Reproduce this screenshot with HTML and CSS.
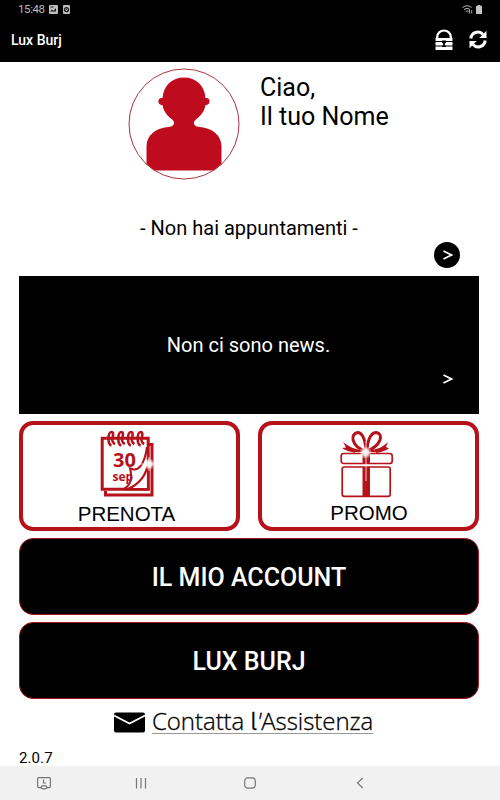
FILE: index.html
```html
<!DOCTYPE html>
<html lang="it">
<head>
    <meta charset="UTF-8">
    <meta name="viewport" content="width=device-width, initial-scale=1">
    <title>Lux Burj</title>
    <link rel="stylesheet" href="styles.css">
</head>
<body>

<div class="status-bar">
    <span class="clock">15:48</span>
    <svg class="status-image" width="9" height="9" viewBox="0 0 9 9">
        <rect width="9" height="9" rx="1" fill="#bbb"/>
        <path d="M1 6.5l2-2 1.5 1.2L7 3v3.5z" fill="#222"/>
        <path d="M1.5 2h3" stroke="#222"/>
    </svg>
    <svg width="7" height="9" viewBox="0 0 7 9">
        <rect width="7" height="9" rx="1" fill="#bbb"/>
        <circle cx="3.5" cy="4.6" r="2" fill="none" stroke="#111" stroke-width="1.2"/>
        <path d="M3 4.6l1-.8" stroke="#111"/>
    </svg>
    <div class="status-right">
        <svg width="11" height="9" viewBox="0 0 11 9" fill="none" stroke="#bbb">
            <path d="M.5 2.5Q5-1 9.500 2.500M2 4.500Q5 2 8 4.500M3.700 6.500Q5 5 6.500 6.500"/>
            <path d="M7.500 5v3.500M9.700 5v3.500" stroke-width=".9"/>
        </svg>
        <svg width="6" height="9" viewBox="0 0 6 9" fill="#c4c4c4">
            <path d="M1.500 0h3v1H6v8H0V1h1.500z"/>
        </svg>
    </div>
</div>

<header class="app-bar">
    <h1>Lux Burj</h1>
    <svg class="lock" width="18" height="22" viewBox="0 0 18 22">
        <path d="M2.200 9V8a6.800 6.500 0 0 1 13.600 0v1" fill="none" stroke="#fff" stroke-width="2.200"/>
        <path d="M.5 9h17v3H.5zM.5 13h17v3.500H.5zM.5 17.500h17V21H.5z" fill="#fff"/>
        <path d="M7 11.500h4v2.200l-1.200.8v2h1.200v1.500H7v-1.500h1.200v-2L7 13.700z" fill="#000"/>
    </svg>
    <svg width="18" height="19" viewBox="0 0 18 19">
        <path d="M1.800 8.500A7 7 0 0 1 14 4.500M16.200 10.500A7 7 0 0 1 4 14.500" fill="none" stroke="#fff" stroke-width="3"/>
        <path d="M17.500.8v7.200h-7.200zM.5 18.200V11h7.200z" fill="#fff"/>
    </svg>
</header>

<main>
    <section class="profile">
        <svg width="112" height="112" viewBox="0 0 112 112">
            <defs>
                <clipPath id="avatar"><circle cx="56" cy="56" r="55"/></clipPath>
            </defs>
            <path clip-path="url(#avatar)" fill="#be0c1e" d="M56 9.500c12 0 20.500 8 21.500 20.500 5-1 6 6.500 0 7.200-1.500 7-5 10.500-8.500 13.200-4 3-4.500 6.800 1 8.300C85 60 93.500 67 93.500 79v23.500h-75V79C18.500 67 27 60 42 58.700c5.500-1.500 5-5.300 1-8.300-3.500-2.700-7-6.200-8.500-13.200-6-.7-5-8.200 0-7.200C35.500 17.500 44 9.500 56 9.500z"/>
            <circle cx="56" cy="56" r="55" fill="none" stroke="#ad3444" stroke-width="1"/>
        </svg>
        <p>Ciao,<br>Il tuo Nome</p>
    </section>

    <section class="appointments">
        <p>- Non hai appuntamenti -</p>
        <svg class="arrow arrow-round" width="26" height="26" viewBox="0 0 26 26">
            <path d="M9.500 9l8 4-8 4"/>
        </svg>
    </section>

    <section class="news">
        <p>Non ci sono news.</p>
        <svg class="arrow" width="26" height="26" viewBox="0 0 26 26">
            <path d="M9.500 9l8 4-8 4"/>
        </svg>
    </section>

    <div class="tiles">
        <div class="tile">
            <svg width="56" height="68" viewBox="0 0 56 68">
                <defs>
                    <radialGradient id="glow">
                        <stop offset="0" stop-color="#fff"/>
                        <stop offset=".45" stop-color="#fff" stop-opacity=".85"/>
                        <stop offset="1" stop-color="#fff" stop-opacity="0"/>
                    </radialGradient>
                </defs>
                <g fill="none" stroke="#b5121b">
                    <path d="M5.500 61v4h46.500V14.500h-4" stroke-width="3"/>
                    <path d="M2.200 8.200h46v51h-46z" fill="#fff" stroke-width="3"/>
                </g>
                <text class="cal-day" x="13" y="37">30</text>
                <text class="cal-month" x="12.500" y="50.500">sep</text>
                <path d="M33 58Q35 50 32 42 44 44 47 28v30z" fill="#fff"/>
                <g fill="none" stroke="#b5121b">
                    <path d="M24 59Q34 53 30 38.500 43 44 47 17" stroke-width="2"/>
                    <path d="M28 59Q44 52 47.500 36" stroke-width="2.200"/>
                    <path d="M24 59.200h24.200V28" stroke-width="2.600"/>
                    <path d="M11.500 15.500c-4-1-4-13.500 0-13.500 2.500 0 1.500 4 1 6s0 5 2.500 6M21.300 15.500c-4-1-4-13.500 0-13.500 2.500 0 1.500 4 1 6s0 5 2.500 6M31 15.500c-4-1-4-13.500 0-13.500 2.500 0 1.500 4 1 6s0 5 2.500 6M40.700 15.500c-4-1-4-13.500 0-13.500 2.500 0 1.500 4 1 6s0 5 2.500 6" stroke-width="2.600"/>
                </g>
                <path d="M40 34h16M49 27v14" stroke="#fff" stroke-width=".8"/>
                <circle cx="49" cy="34" r="6" fill="url(#glow)"/>
            </svg>
            <span>PRENOTA</span>
        </div>
        <div class="tile promo">
            <svg width="56" height="68" viewBox="0 0 56 68">
                <g fill="none" stroke="#b5121b">
                    <rect x="2.200" y="23.500" width="51" height="10" rx="2.500" stroke-width="1.700"/>
                    <rect x="3.200" y="37" width="48" height="29.300" rx="2" stroke-width="1.700"/>
                    <path d="M26 21C12 16 11 4 18.500 2.500 24 2.500 26 10 27 19" stroke-width="3"/>
                    <path d="M28 21C42 16 45 4 37.500 2.500 32 2.500 29 10 28 19" stroke-width="3"/>
                </g>
                <path d="M25 20C17 20 10 17 4 12l3 5.500-4 .5C11 23 18 23 25 23.500zM29 20c9 0 15-3 20-8l-2 5 3 1.500C43 23 36 23 29 23.500zM23.500 23h7.500v11h-7.500zM23.500 37h7.500v29h-7.500z" fill="#b5121b"/>
                <path d="M27 11v40" stroke="#fff" stroke-opacity=".5" stroke-width="1.500"/>
                <path d="M16 22.500h21" stroke="#fff" stroke-opacity=".7"/>
                <circle cx="26.500" cy="22.500" r="6.500" fill="url(#glow)"/>
            </svg>
            <span>PROMO</span>
        </div>
    </div>

    <div class="big-button">IL MIO ACCOUNT</div>
    <div class="big-button">LUX BURJ</div>

    <div class="support">
        <svg width="31" height="21" viewBox="0 0 31 21">
            <rect y=".5" width="31" height="20" rx="2"/>
            <path d="M0 3.500l15.500 8 15.500-8" fill="none" stroke="#fff" stroke-width="1.800"/>
        </svg>
        <a>Contatta <span class="tail">l</span><i>'</i>Assistenza</a>
    </div>

    <div class="version">2.0.7</div>
</main>

<nav class="nav-bar">
    <svg width="14" height="13" viewBox="0 0 14 13">
        <rect x=".6" y=".6" width="12.800" height="10" rx="1"/>
        <path d="M6.500 2.500v3.500h2.500"/>
        <ellipse cx="7" cy="10.300" rx="2.800" ry="1.600" fill="#f1f1f1"/>
    </svg>
    <svg width="12" height="12" viewBox="0 0 12 12">
        <path d="M1.500 1v10.500M6 1v10.500M10.500 1v10.500"/>
    </svg>
    <svg width="12" height="12" viewBox="0 0 12 12">
        <rect x=".7" y=".8" width="10.600" height="10.400" rx="3"/>
    </svg>
    <svg width="8" height="12" viewBox="0 0 8 12">
        <path d="M6.800 1L1.500 6l5.300 5"/>
    </svg>
</nav>

</body>
</html>
```

FILE: styles.css
```css
* {
    box-sizing: border-box;
}

body {
    margin: 0;
    height: 800px;
    overflow: hidden;
    display: flex;
    flex-direction: column;
    font-family: Roboto, sans-serif;
    background-color: #fff;
    color: #000;
}

p, h1 {
    margin: 0;
    font-weight: 400;
}

svg {
    display: block;
    flex: none;
}

.status-bar {
    height: 18px;
    padding: 0 18px;
    display: flex;
    align-items: center;
    background-color: #000;
    color: #bbb;
    font-size: 11.5px;
}

.clock {
    width: 31px;
    letter-spacing: -0.4px;
}

.status-image {
    margin-right: 5px;
}

.status-right {
    margin-left: auto;
    display: flex;
    gap: 3px;
}

.app-bar {
    height: 44px;
    padding: 0 13px 0 11px;
    display: flex;
    align-items: center;
    gap: 16px;
    background-color: #000;
    color: #fff;
}

.app-bar h1 {
    flex: 1;
    font-size: 14px;
    font-weight: 500;
}

.app-bar svg {
    margin-top: -1px;
}

main {
    height: 704px;
    padding: 6px 21px 0 19px;
}

.profile {
    height: 145px;
    padding-left: 109px;
    display: flex;
    gap: 20px;
}

.profile p {
    padding-top: 5px;
    font-size: 25px;
    line-height: 29px;
}

.appointments {
    height: 63px;
    padding: 4px 19px 0 0;
}

.appointments p {
    font-size: 20px;
    line-height: 23px;
    text-align: center;
    padding-left: 19px;
}

.arrow {
    margin-left: auto;
    fill: none;
    stroke: #fff;
    stroke-width: 1.8;
}

.arrow-round {
    margin-top: 2px;
    border-radius: 50%;
    background-color: #000;
}

.news {
    height: 138px;
    padding: 58px 19px 0 0;
    background-color: #000;
    color: #fff;
}

.news p {
    padding-left: 18px;
    font-size: 20px;
    line-height: 23px;
    text-align: center;
}

.news .arrow {
    margin-top: 9px;
}

.tiles {
    margin-top: 7px;
    display: grid;
    grid-template-columns: 221px 221px;
    justify-content: space-between;
}

.tile {
    height: 110px;
    padding: 5px 4px 0 0;
    display: flex;
    flex-direction: column;
    align-items: center;
    border: 4px solid #b5121b;
    border-radius: 14px;
    font-family: "Liberation Sans", sans-serif;
    font-size: 20.5px;
}

.tile span {
    margin-top: 4px;
    margin-left: -2px;
    line-height: 24px;
}

.promo {
    padding-right: 3px;
}

.promo span {
    margin-top: 3px;
    margin-left: 4px;
}

.cal-day {
    font: bold 20px "Open Sans", sans-serif;
    fill: #b5121b;
}

.cal-month {
    font: bold 12px "Open Sans", sans-serif;
    fill: #b5121b;
}

.big-button {
    height: 77px;
    margin-top: 7px;
    padding-top: 2px;
    display: flex;
    align-items: center;
    justify-content: center;
    border: 1px solid #a5141f;
    border-radius: 14px;
    background-color: #000;
    color: #fff;
    font-size: 25px;
    font-weight: 500;
}

.support {
    height: 46px;
    padding-left: 95px;
    display: flex;
    align-items: center;
    gap: 7px;
}

.support a {
    height: 27px;
    margin-top: -3px;
    border-bottom: 1px solid #999;
    font-family: "Open Sans", "Noto Sans", sans-serif;
    font-size: 24px;
    font-weight: 300;
    line-height: 27px;
    letter-spacing: -0.05px;
    -webkit-text-stroke: 0.3px #000;
}

.tail {
    font-family: Inter, sans-serif;
    font-feature-settings: "cv05";
}

.version {
    padding-top: 4px;
    font-size: 15px;
    line-height: 18px;
    letter-spacing: 0.1px;
}

.nav-bar {
    height: 34px;
    padding: 0 0 0 37px;
    display: grid;
    grid-template-columns: 98px 109px 112px auto;
    align-items: center;
    background-color: #f1f1f1;
}

.nav-bar svg {
    fill: none;
    stroke: #777;
    stroke-width: 1.2;
}
```
